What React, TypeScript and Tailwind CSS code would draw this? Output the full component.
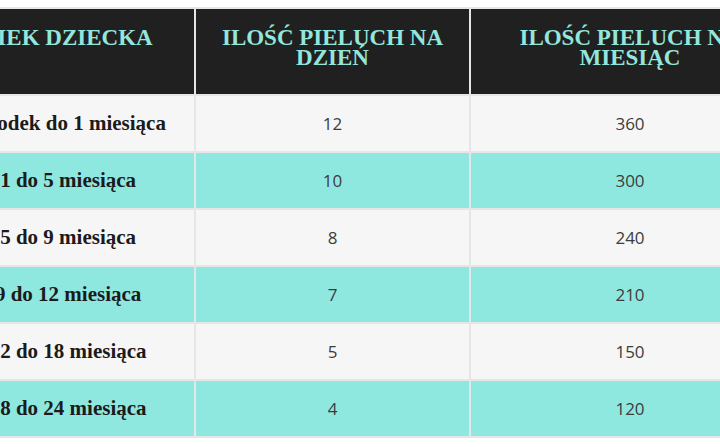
import React from "react";

const rows = [
  { age: "Noworodek do 1 miesiąca", day: "12", month: "360" },
  { age: "Od 1 do 5 miesiąca", day: "10", month: "300" },
  { age: "Od 5 do 9 miesiąca", day: "8", month: "240" },
  { age: "Od 9 do 12 miesiąca", day: "7", month: "210" },
  { age: "Od 12 do 18 miesiąca", day: "5", month: "150" },
  { age: "Od 18 do 24 miesiąca", day: "4", month: "120" },
];

const headCls =
  "h-[85px] bg-[#202020] pt-[19px] text-center font-['Liberation_Serif','DejaVu_Serif',serif] text-[23px] font-bold leading-[20px] text-[#92e6dc]";
const numCls =
  "flex h-[55px] items-center justify-center font-['Open_Sans','Noto_Sans',sans-serif] text-[17px] text-[#3c3c3c]";

export default function App() {
  return (
    <div className="h-[447px] w-[720px] overflow-hidden bg-white">
      <div className="mt-[7px] ml-[-59px] w-fit bg-[#e6e6e6] p-[2px]">
        <div className="grid grid-cols-[251px_273px_318px] gap-[2px]">
          <div className={`${headCls} pr-[10px]`}>WIEK DZIECKA</div>
          <div className={`${headCls} px-6`}>ILOŚĆ PIELUCH NA DZIEŃ</div>
          <div className={`${headCls} px-6`}>ILOŚĆ PIELUCH NA MIESIĄC</div>

          {rows.map((r, i) => {
            const bg = i % 2 === 0 ? "bg-[#f6f6f6]" : "bg-[#8fe8e0]";
            return (
              <React.Fragment key={r.age}>
                <div
                  className={`${bg} flex h-[55px] items-center justify-center whitespace-nowrap pr-[34px] font-['Liberation_Serif','DejaVu_Serif',serif] text-[21px] font-bold text-[#1b1b1b]`}
                >
                  {r.age}
                </div>
                <div className={`${bg} ${numCls}`}>{r.day}</div>
                <div className={`${bg} ${numCls}`}>{r.month}</div>
              </React.Fragment>
            );
          })}
        </div>
      </div>
    </div>
  );
}
